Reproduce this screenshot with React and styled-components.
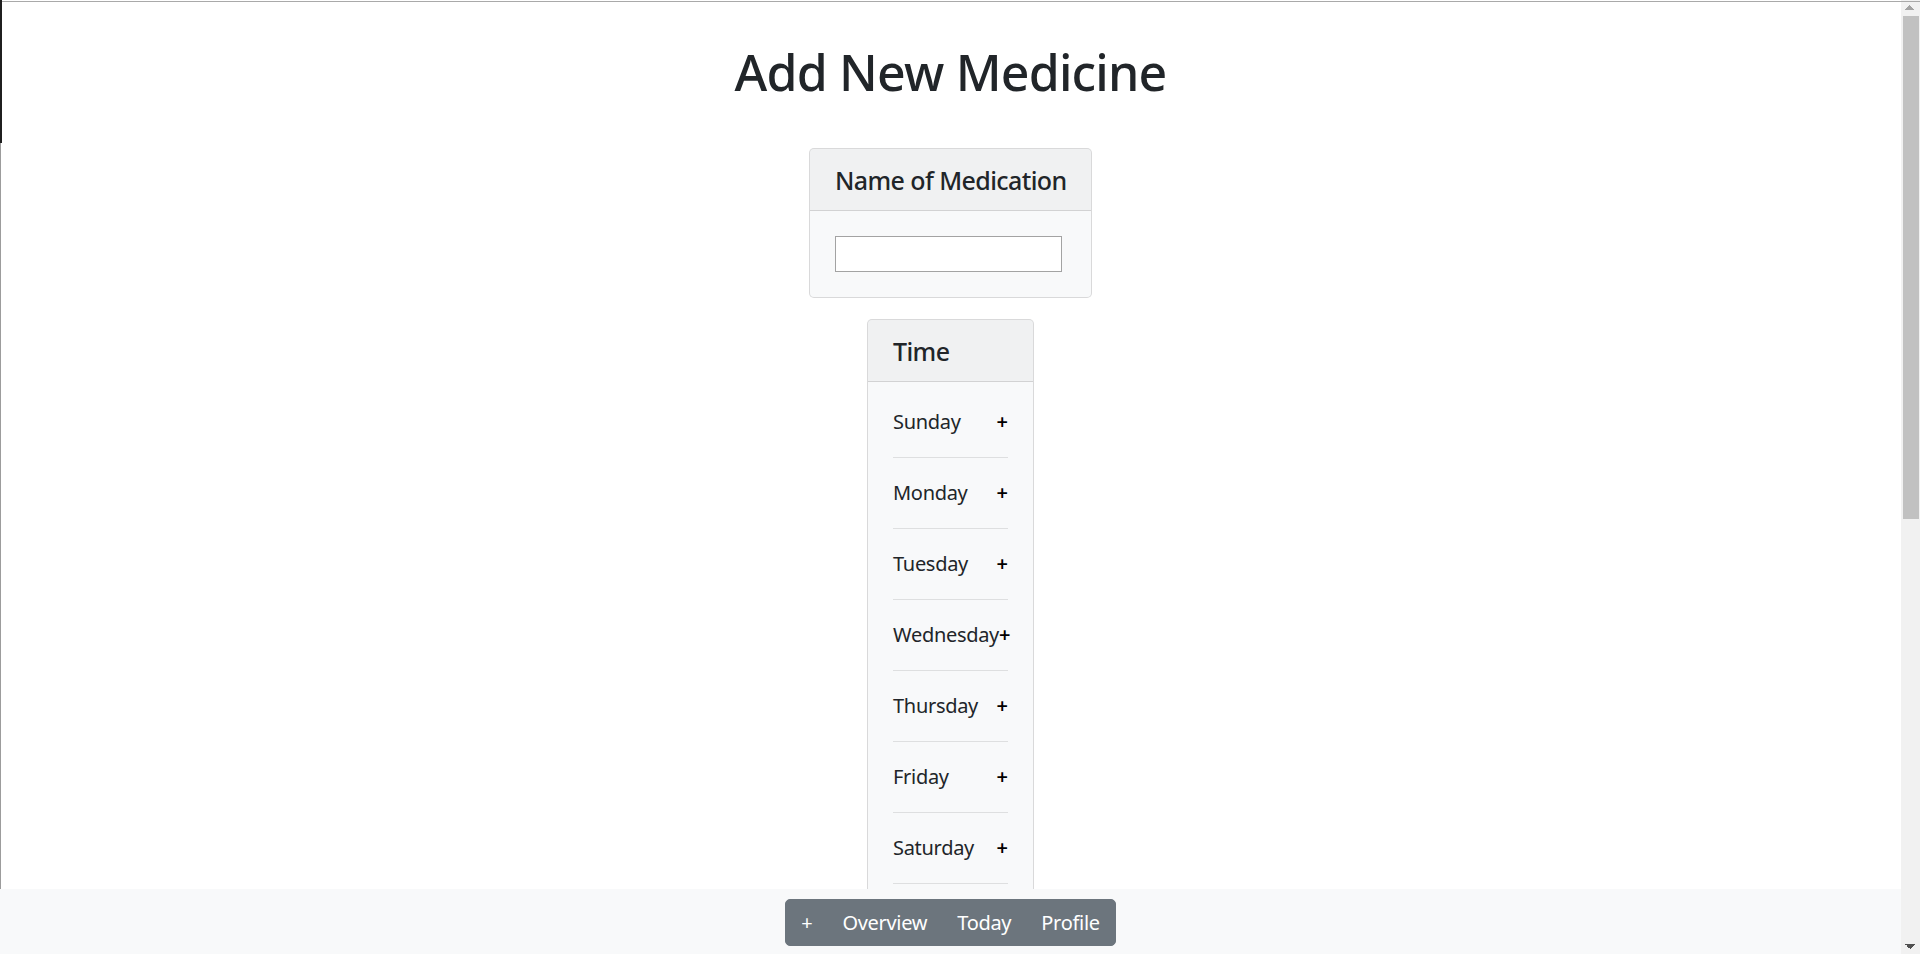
import React from "react";
import styled, { createGlobalStyle } from "styled-components";

// the reference was taken with a classic scrollbar on the right; it is painted
// into the canvas here so the page keeps the same usable width
const SCROLLBAR = 19;

const GlobalStyle = createGlobalStyle`
    html {
        background:
            linear-gradient(to top left, #a3a3a3 50%, transparent 50%) right 10px top 5px / 5px 5px no-repeat fixed,
            linear-gradient(to top right, #a3a3a3 50%, transparent 50%) right 5px top 5px / 5px 5px no-repeat fixed,
            linear-gradient(to bottom left, #505050 50%, transparent 50%) right 10px bottom 5px / 5px 5px no-repeat fixed,
            linear-gradient(to bottom right, #505050 50%, transparent 50%) right 5px bottom 5px / 5px 5px no-repeat fixed,
            linear-gradient(#1f1f1f, #1f1f1f) 0 0 / 2px 143px no-repeat fixed,
            linear-gradient(#9c9c9c, #9c9c9c) 0 0 / 1px 100% no-repeat fixed,
            linear-gradient(#a9a9a9, #a9a9a9) 0 1px / 100% 1px no-repeat fixed,
            linear-gradient(#c1c1c1, #c1c1c1) right 1px top 16px / 16px 503px no-repeat fixed,
            linear-gradient(#f1f1f1, #f1f1f1) right 0 top 0 / ${SCROLLBAR}px 100% no-repeat fixed,
            #fff;
    }

    body {
        margin: 0;
        font-family: "Noto Sans", "Open Sans", sans-serif;
        font-size: 20px;
        line-height: 1.5;
        color: #212529;
    }

    *, *::before, *::after {
        box-sizing: border-box;
    }
`;

const Page = styled.main`
    width: calc(100% - ${SCROLLBAR}px);
    min-height: 1741px;
    display: flex;
    flex-direction: column;
    align-items: center;
`;

const Title = styled.h1`
    margin: 42px 0 46px;
    font-size: 50px;
    font-weight: 500;
    line-height: 60px;
    letter-spacing: -0.8px;
`;

const Card = styled.section`
    width: ${(p) => p.width}px;
    margin-bottom: 21px;
    background: #f8f9fa;
    border: 1px solid rgba(0, 0, 0, 0.125);
    border-radius: 5px;
    overflow: hidden;
`;

const CardHeader = styled.header`
    padding: 15.5px 25px;
    background: rgba(0, 0, 0, 0.03);
    border-bottom: 1px solid rgba(0, 0, 0, 0.125);
`;

const CardTitle = styled.h5`
    margin: 0;
    font-size: 25px;
    font-weight: 500;
    line-height: 30px;
    white-space: nowrap;
    letter-spacing: -0.6px;
`;

const CardBody = styled.div`
    padding: 25px;
`;

const NameInput = styled.input`
    display: block;
    width: 227px;
    height: 36px;
    margin: 0;
    padding: 2px 4px;
    font: inherit;
    background: #fff;
    border: 1px solid #a3a3a3;
    border-radius: 0;
`;

const DayList = styled.div`
    display: flex;
    flex-direction: column;
`;

const DayRow = styled.div`
    display: flex;
    align-items: center;
    justify-content: space-between;
    height: 30px;
    white-space: nowrap;
    letter-spacing: -0.3px;
`;

const AddTime = styled.button`
    padding: 0;
    border: 0;
    background: none;
    font: inherit;
    font-weight: 600;
    color: #000;
    cursor: pointer;
`;

const Divider = styled.hr`
    margin: 20px 0;
    border: 0;
    border-top: 1px solid rgba(0, 0, 0, 0.1);
`;

const BottomBar = styled.nav`
    position: fixed;
    left: 0;
    right: ${SCROLLBAR}px;
    bottom: 0;
    display: flex;
    justify-content: center;
    padding: 10px 20px 8px;
    background: #f8f9fa;
`;

const ButtonGroup = styled.div`
    display: flex;
    background: #6c757d;
    border: 1px solid #6c757d;
    border-radius: 5px;
`;

const NavButton = styled.button`
    padding: 7.5px 15px;
    border: 0;
    background: none;
    font: inherit;
    line-height: 30px;
    color: #fff;
    letter-spacing: -0.3px;
    cursor: pointer;
`;

const days = ["Sunday", "Monday", "Tuesday", "Wednesday", "Thursday", "Friday", "Saturday"];

export default function App() {
    return (
        <>
            <GlobalStyle />
            <Page>
                <Title>Add New Medicine</Title>

                <Card width={283}>
                    <CardHeader>
                        <CardTitle>Name of Medication</CardTitle>
                    </CardHeader>
                    <CardBody>
                        <NameInput type="text" aria-label="Name of Medication" />
                    </CardBody>
                </Card>

                <Card width={167}>
                    <CardHeader>
                        <CardTitle>Time</CardTitle>
                    </CardHeader>
                    <CardBody>
                        <DayList>
                            {days.map((day) => (
                                <React.Fragment key={day}>
                                    <DayRow>
                                        {day}
                                        <AddTime type="button" aria-label={`Add time on ${day}`}>+</AddTime>
                                    </DayRow>
                                    <Divider />
                                </React.Fragment>
                            ))}
                        </DayList>
                    </CardBody>
                </Card>
            </Page>

            <BottomBar>
                <ButtonGroup>
                    <NavButton type="button">+</NavButton>
                    <NavButton type="button">Overview</NavButton>
                    <NavButton type="button">Today</NavButton>
                    <NavButton type="button">Profile</NavButton>
                </ButtonGroup>
            </BottomBar>
        </>
    );
}
